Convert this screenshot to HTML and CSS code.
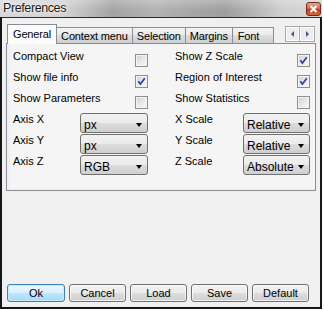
FILE: index.html
```html
<!DOCTYPE html>
<html>
<head>
<meta charset="utf-8">
<link rel="stylesheet" href="styles.css">
</head>
<body>
<div class="window">
  <div class="titlebar">
    <span class="title">Preferences</span>
    <span class="close"><svg width="9" height="8" viewBox="0 0 9 8"><path d="M1.5 1 L7.5 7 M7.5 1 L1.5 7" stroke="#fff" stroke-width="2"/></svg></span>
  </div>
  <div class="client">
    <div class="tabstrip">
      <div class="tab active">General</div>
      <div class="tab">Context menu</div>
      <div class="tab">Selection</div>
      <div class="tab">Margins</div>
      <div class="tab font">Font</div>
      <div class="scroller">
        <span class="sbtn"><span class="arr left"></span></span>
        <span class="sbtn"><span class="arr right"></span></span>
      </div>
    </div>
    <div class="panel">
      <div class="inner">
        <div class="grid">
          <span class="lbl">Compact View</span>
          <span class="check"></span>
          <span class="lbl col3">Show Z Scale</span>
          <span class="check on"><svg viewBox="0 0 11 11"><path d="M2.3 5.2 L4.4 8 L8.8 2.2" fill="none" stroke="#2b44a0" stroke-width="1.7"/></svg></span>

          <span class="lbl">Show file info</span>
          <span class="check on"><svg viewBox="0 0 11 11"><path d="M2.3 5.2 L4.4 8 L8.8 2.2" fill="none" stroke="#2b44a0" stroke-width="1.7"/></svg></span>
          <span class="lbl col3">Region of Interest</span>
          <span class="check on"><svg viewBox="0 0 11 11"><path d="M2.3 5.2 L4.4 8 L8.8 2.2" fill="none" stroke="#2b44a0" stroke-width="1.7"/></svg></span>

          <span class="lbl">Show Parameters</span>
          <span class="check"></span>
          <span class="lbl col3">Show Statistics</span>
          <span class="check"></span>

          <span class="lbl">Axis X</span>
          <span class="combo">px<span class="tri"></span></span>
          <span class="lbl col3">X Scale</span>
          <span class="combo">Relative<span class="tri"></span></span>

          <span class="lbl">Axis Y</span>
          <span class="combo">px<span class="tri"></span></span>
          <span class="lbl col3">Y Scale</span>
          <span class="combo">Relative<span class="tri"></span></span>

          <span class="lbl">Axis Z</span>
          <span class="combo">RGB<span class="tri"></span></span>
          <span class="lbl col3">Z Scale</span>
          <span class="combo">Absolute<span class="tri"></span></span>
        </div>
      </div>
    </div>
    <div class="buttons">
      <span class="btn default">Ok</span>
      <span class="btn">Cancel</span>
      <span class="btn">Load</span>
      <span class="btn">Save</span>
      <span class="btn">Default</span>
    </div>
  </div>
</div>
</body>
</html>
```
FILE: styles.css
```css
* { box-sizing: border-box; }
html, body { margin: 0; padding: 0; background: #ffffff; }
body {
  width: 324px;
  height: 310px;
  overflow: hidden;
  font-family: "Liberation Sans", Arial, sans-serif;
  font-size: 11px;
  color: #000;
}
.window {
  width: 322px;
  height: 309px;
  display: flex;
  flex-direction: column;
}
.titlebar {
  height: 17px;
  display: flex;
  justify-content: space-between;
  align-items: flex-start;
  background:
    linear-gradient(to bottom, rgba(255,255,255,0.25), rgba(255,255,255,0) 60%),
    linear-gradient(to right, #d9d9d9 0%, #d2d2d2 20%, #bdbdbd 27%, #a3a3a3 35%, #b3b3b3 48%, #a6a6a6 60%, #9e9e9e 70%, #b9b9b9 80%, #cfcfcf 88%, #d6d6d6 100%);
}
.title {
  font-size: 12.5px;
  line-height: 15px;
  padding: 1px 0 0 3px;
  color: #1a1a1a;
  letter-spacing: -0.4px;
  text-shadow: 0 0 4px rgba(255,255,255,0.9), 0 0 2px rgba(255,255,255,0.9);
}
.close {
  width: 15px;
  height: 14px;
  margin-top: 2px;
  margin-right: 1px;
  border: 1px solid #6e2a1c;
  border-radius: 3px;
  background: linear-gradient(to bottom, #e9a38f 0%, #d7694e 45%, #c2391d 55%, #d26a42 100%);
  display: flex;
  align-items: center;
  justify-content: center;
}
.close svg { display: block; }
.client {
  flex: 1;
  background: #f0f0f0;
  border: 2px solid #161616;
  border-top: 1px solid #2a2a2a;
  padding: 0 4px 0 4px;
  display: flex;
  flex-direction: column;
}
.tabstrip {
  margin-top: 6px;
  height: 19px;
  display: flex;
  align-items: flex-end;
  padding-left: 1px;
}
.tab {
  height: 16px;
  padding: 2px 4px 0 4px;
  line-height: 13px;
  letter-spacing: -0.15px;
  border: 1px solid #898c95;
  border-bottom: none;
  margin-right: -1px;
  background: linear-gradient(to bottom, #f3f3f3 0%, #ebebeb 50%, #dddddd 50%, #cfcfcf 100%);
  white-space: nowrap;
}
.tab.font { min-width: 42px; padding-left: 5px; }
.tab.active {
  height: 20px;
  padding-top: 3px;
  margin-bottom: -1px;
  position: relative;
  z-index: 2;
  background: #fcfcfc;
  padding-left: 5px;
  padding-right: 5px;
}
.scroller {
  margin-left: auto;
  margin-right: 1px;
  margin-bottom: 1px;
  height: 16px;
  display: flex;
}
.sbtn {
  width: 15px;
  height: 16px;
  border: 1px solid #a9a9a9;
  box-shadow: inset 0 0 0 1px #fdfdfd;
  background: #ececec;
  display: flex;
  align-items: center;
  justify-content: center;
}
.sbtn + .sbtn { border-left: none; }
.arr { width: 0; height: 0; border-top: 3px solid transparent; border-bottom: 3px solid transparent; }
.arr.left { border-right: 3px solid #3f5590; }
.arr.right { border-left: 3px solid #3f5590; }
.panel {
  height: 148px;
  border: 1px solid #898c95;
  padding: 0 0 2px 3px;
}
.inner {
  height: 100%;
  background: #f5f5f5;
  padding: 6px 0 0 3px;
}
.grid {
  display: grid;
  grid-template-columns: 67px 68px 95px 67px;
  grid-auto-rows: 21px;
}
.lbl {
  line-height: 13px;
  white-space: nowrap;
  align-self: start;
}
.lbl.col3 { padding-left: 27px; }
.check {
  width: 13px;
  height: 13px;
  margin-top: 4px;
  justify-self: end;
  align-self: start;
  border: 1px solid #8e8f8f;
  box-shadow: inset 0 0 0 1px #f4f4f4;
  background: linear-gradient(135deg, #cfcfcf 0%, #e6e6e6 45%, #f8f8f8 100%);
  display: flex;
}
.check svg { width: 11px; height: 11px; display: block; }
.combo {
  height: 20px;
  align-self: start;
  border: 1px solid #707070;
  border-radius: 3px;
  padding: 4px 0 0 3px;
  font-size: 12px;
  line-height: 14px;
  background: linear-gradient(to bottom, #f2f2f2 0%, #ebebeb 50%, #dddddd 50%, #cfcfcf 100%);
  display: flex;
  justify-content: space-between;
  white-space: nowrap;
}
.tri {
  width: 0;
  height: 0;
  margin: 5px 5px 0 0;
  border-left: 3.5px solid transparent;
  border-right: 3.5px solid transparent;
  border-top: 4px solid #000;
}
.buttons {
  margin-top: auto;
  margin-bottom: 5px;
  padding: 0 7px 0 1px;
  display: flex;
  justify-content: space-between;
}
.btn {
  width: 57px;
  height: 18px;
  border: 1px solid #707070;
  border-radius: 3px;
  text-align: center;
  line-height: 16px;
  background: linear-gradient(to bottom, #f2f2f2 0%, #ebebeb 50%, #dddddd 50%, #cfcfcf 100%);
  box-shadow: inset 0 0 0 1px rgba(255,255,255,0.7);
}
.btn.default {
  width: 58px;
  border-color: #3c7fb1;
  background: linear-gradient(to bottom, #eaf6fd 0%, #d9f0fc 50%, #bee6fd 50%, #a7d9f5 100%);
  box-shadow: inset 0 0 0 1px #c6ecfc;
}
```
